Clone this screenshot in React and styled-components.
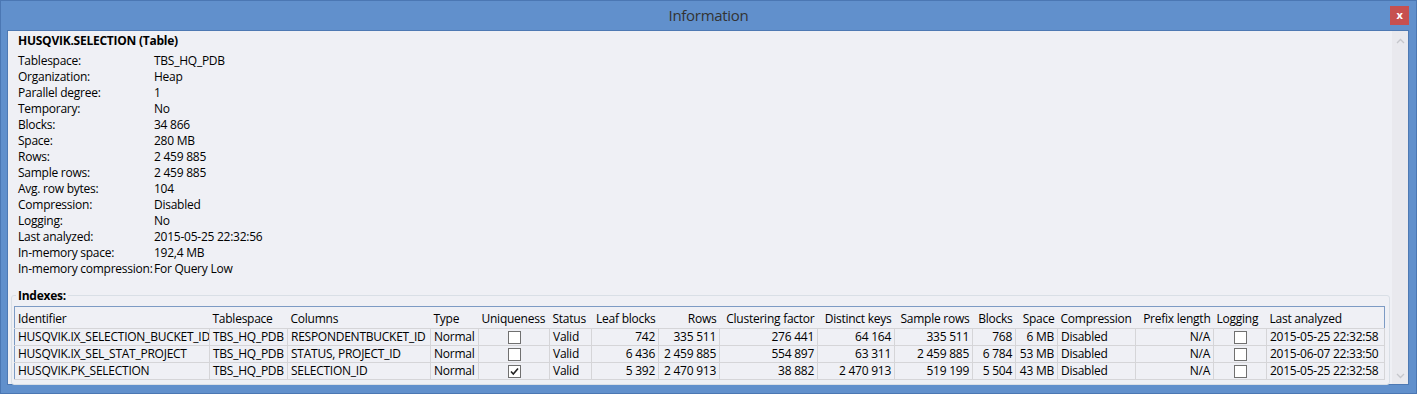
import styled, { createGlobalStyle } from 'styled-components';

const GlobalStyle = createGlobalStyle`
  html, body {
    margin: 0;
    padding: 0;
    background: #6190cc;
  }
`;

const props = [
  ['Tablespace:', 'TBS_HQ_PDB'],
  ['Organization:', 'Heap'],
  ['Parallel degree:', '1'],
  ['Temporary:', 'No'],
  ['Blocks:', '34 866'],
  ['Space:', '280 MB'],
  ['Rows:', '2 459 885'],
  ['Sample rows:', '2 459 885'],
  ['Avg. row bytes:', '104'],
  ['Compression:', 'Disabled'],
  ['Logging:', 'No'],
  ['Last analyzed:', '2015-05-25 22:32:56'],
  ['In-memory space:', '192,4 MB'],
  ['In-memory compression:', 'For Query Low'],
];

// key, title, width, align
const columns = [
  ['id', 'Identifier', 195, 'left'],
  ['ts', 'Tablespace', 78, 'left'],
  ['cols', 'Columns', 143, 'left'],
  ['type', 'Type', 48, 'left'],
  ['uniq', 'Uniqueness', 71, 'check'],
  ['status', 'Status', 42, 'left'],
  ['leaf', 'Leaf blocks', 67, 'right'],
  ['rows', 'Rows', 61, 'right'],
  ['clust', 'Clustering factor', 98, 'right'],
  ['dist', 'Distinct keys', 77, 'right'],
  ['sample', 'Sample rows', 78, 'right'],
  ['blocks', 'Blocks', 43, 'right'],
  ['space', 'Space', 42, 'right'],
  ['comp', 'Compression', 78, 'left'],
  ['prefix', 'Prefix length', 78, 'right'],
  ['log', 'Logging', 53, 'check'],
  ['last', 'Last analyzed', 118, 'left'],
];

const indexes = [
  {
    id: 'HUSQVIK.IX_SELECTION_BUCKET_ID', ts: 'TBS_HQ_PDB', cols: 'RESPONDENTBUCKET_ID', type: 'Normal',
    uniq: false, status: 'Valid', leaf: '742', rows: '335 511', clust: '276 441', dist: '64 164',
    sample: '335 511', blocks: '768', space: '6 MB', comp: 'Disabled', prefix: 'N/A', log: false,
    last: '2015-05-25 22:32:58',
  },
  {
    id: 'HUSQVIK.IX_SEL_STAT_PROJECT', ts: 'TBS_HQ_PDB', cols: 'STATUS, PROJECT_ID', type: 'Normal',
    uniq: false, status: 'Valid', leaf: '6 436', rows: '2 459 885', clust: '554 897', dist: '63 311',
    sample: '2 459 885', blocks: '6 784', space: '53 MB', comp: 'Disabled', prefix: 'N/A', log: false,
    last: '2015-06-07 22:33:50',
  },
  {
    id: 'HUSQVIK.PK_SELECTION', ts: 'TBS_HQ_PDB', cols: 'SELECTION_ID', type: 'Normal',
    uniq: true, status: 'Valid', leaf: '5 392', rows: '2 470 913', clust: '38 882', dist: '2 470 913',
    sample: '519 199', blocks: '5 504', space: '43 MB', comp: 'Disabled', prefix: 'N/A', log: false,
    last: '2015-05-25 22:32:58',
  },
];

const Chevron = ({ down }) => (
  <svg width="9" height="6" viewBox="0 0 9 6">
    <path
      d={down ? 'M1 1 L4.5 4.5 L8 1' : 'M1 5 L4.5 1.5 L8 5'}
      fill="none"
      stroke="#c6c7cc"
      strokeWidth="1.3"
    />
  </svg>
);

const CheckBox = ({ checked }) => (
  <Box>
    {checked && (
      <svg width="11" height="11" viewBox="0 0 11 11">
        <path d="M2 5.5 L4.3 8 L9 2.5" fill="none" stroke="#222" strokeWidth="1.6" />
      </svg>
    )}
  </Box>
);

const App = () => {
  return (
    <>
      <GlobalStyle />
      <Window>
        <TitleBar>
          <span />
          <Title>Information</Title>
          <CloseButton>x</CloseButton>
        </TitleBar>
        <Content>
          <Main>
            <Details>
              <Heading>HUSQVIK.SELECTION (Table)</Heading>
              <PropGrid>
                {props.map(([label, value]) => (
                  <PropRow key={label}>
                    <span>{label}</span>
                    <span>{value}</span>
                  </PropRow>
                ))}
              </PropGrid>
            </Details>
            <Group>
              <Legend>Indexes:</Legend>
              <Table>
                <colgroup>
                  {columns.map(([key, , width]) => (
                    <col key={key} style={{ width }} />
                  ))}
                </colgroup>
                <thead>
                  <tr>
                    {columns.map(([key, title, , align]) => (
                      <HeadCell key={key} $align={align}>{title}</HeadCell>
                    ))}
                  </tr>
                </thead>
                <tbody>
                  {indexes.map((row) => (
                    <tr key={row.id}>
                      {columns.map(([key, , , align]) => (
                        <Cell key={key} $align={align}>
                          {align === 'check' ? <CheckBox checked={row[key]} /> : row[key]}
                        </Cell>
                      ))}
                    </tr>
                  ))}
                </tbody>
              </Table>
            </Group>
          </Main>
          <ScrollBar>
            <Chevron />
            <Chevron down />
          </ScrollBar>
        </Content>
      </Window>
    </>
  );
};

const Window = styled.div`
  box-sizing: border-box;
  width: 1417px;
  height: 394px;
  display: flex;
  flex-direction: column;
  background: #6190cc;
  border: 1px solid #4b77b3;
  font-family: 'Open Sans', sans-serif;
  font-size: 12px;
  letter-spacing: -0.25px;
  color: #000;
`;

const TitleBar = styled.div`
  height: 29px;
  display: grid;
  grid-template-columns: 1fr auto 1fr;
  align-items: center;
  padding: 0 7px;
`;

const Title = styled.div`
  font-size: 15px;
  letter-spacing: -0.3px;
  color: #333;
  padding-bottom: 2px;
`;

const CloseButton = styled.div`
  justify-self: end;
  align-self: start;
  margin-top: 5px;
  width: 19px;
  height: 19px;
  background: #c75050;
  color: #fff;
  font-weight: bold;
  font-size: 11px;
  line-height: 17px;
  text-align: center;
`;

const Content = styled.div`
  flex: 1;
  margin: 0 7px 8px 6px;
  display: flex;
  background: #eff0f5;
  border: 1px solid #4e79b3;
  min-height: 0;
`;

const Main = styled.div`
  flex: 1;
  min-width: 0;
  padding: 2px 2px 0 3px;
  display: flex;
  flex-direction: column;
`;

const Details = styled.div`
  padding-left: 7px;
`;

const Heading = styled.div`
  font-weight: bold;
  line-height: 16px;
  margin-bottom: 4px;
`;

const PropGrid = styled.div`
  display: flex;
  flex-direction: column;
`;

const PropRow = styled.div`
  display: grid;
  grid-template-columns: 136px 1fr;
  line-height: 16px;
  white-space: nowrap;
`;

const Group = styled.fieldset`
  margin: 11px 0 0 0;
  padding: 0 4px 4px 2px;
  border: 1px solid #d9dfe6;
  border-radius: 3px;
  min-width: 0;
`;

const Legend = styled.legend`
  font-weight: bold;
  margin-left: 2px;
  padding: 0 2px 0 2px;
  line-height: 15px;
`;

const Table = styled.table`
  width: 1371px;
  table-layout: fixed;
  border-collapse: collapse;
  border: 1px solid #7d9bc4;
  margin-top: 3px;
`;

const HeadCell = styled.th`
  height: 20px;
  padding: 1px 3px 0 3px;
  font-weight: normal;
  text-align: ${(p) => (p.$align === 'right' ? 'right' : 'left')};
  white-space: nowrap;
  overflow: hidden;
  vertical-align: middle;
`;

const Cell = styled.td`
  height: 16px;
  padding: 0 3px;
  line-height: 16px;
  border: 1px solid #d5d5d8;
  text-align: ${(p) => (p.$align === 'right' ? 'right' : p.$align === 'check' ? 'center' : 'left')};
  white-space: nowrap;
  overflow: hidden;
  vertical-align: middle;

  &:first-child {
    border-left: none;
  }
`;

const Box = styled.span`
  box-sizing: border-box;
  display: inline-flex;
  align-items: center;
  justify-content: center;
  width: 13px;
  height: 13px;
  background: #fff;
  border: 1px solid #707070;
  vertical-align: middle;
`;

const ScrollBar = styled.div`
  width: 16px;
  background: #e9e9ee;
  display: flex;
  flex-direction: column;
  align-items: center;
  justify-content: space-between;
  padding: 7px 0 5px;
`;

export default App;
